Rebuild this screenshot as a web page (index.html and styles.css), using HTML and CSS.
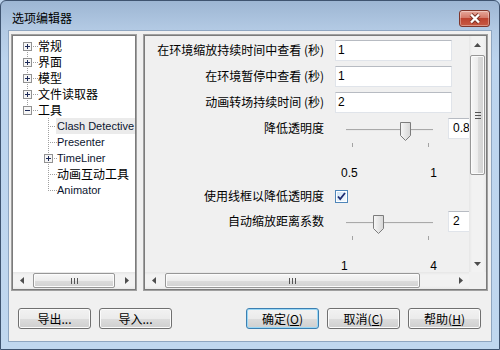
FILE: index.html
```html
<!DOCTYPE html>
<html lang="zh-CN">
<head>
  <meta charset="UTF-8">
  <title>选项编辑器</title>
  <link rel="stylesheet" href="styles.css">
</head>
<body>
  <div class="window">
    <div class="titlebar">
      <span class="title">选项编辑器</span>
      <span class="close">
        <svg width="12" height="11" viewBox="0 0 12 11">
          <path d="M2 1.5L10 9.5M10 1.5L2 9.5" stroke="#7a3328" stroke-width="4.2"/>
          <path d="M2 1.5L10 9.5M10 1.5L2 9.5" stroke="#fff" stroke-width="2.4"/>
        </svg>
      </span>
    </div>

    <div class="client">
      <div class="panes">
        <div class="tree-pane">
          <ul class="tree">
            <li><div class="row vl-down"><span class="cell"><svg width="9" height="9"><rect x="0.5" y="0.5" width="8" height="8" fill="#f6f6f6" stroke="#929292"/><path d="M2 4.5h5M4.5 2v5" stroke="#1d2a58"/></svg></span><span class="dots"></span><span class="lbl">常规</span></div></li>
            <li><div class="row vl-full"><span class="cell"><svg width="9" height="9"><rect x="0.5" y="0.5" width="8" height="8" fill="#f6f6f6" stroke="#929292"/><path d="M2 4.5h5M4.5 2v5" stroke="#1d2a58"/></svg></span><span class="dots"></span><span class="lbl">界面</span></div></li>
            <li><div class="row vl-full"><span class="cell"><svg width="9" height="9"><rect x="0.5" y="0.5" width="8" height="8" fill="#f6f6f6" stroke="#929292"/><path d="M2 4.5h5M4.5 2v5" stroke="#1d2a58"/></svg></span><span class="dots"></span><span class="lbl">模型</span></div></li>
            <li><div class="row vl-full"><span class="cell"><svg width="9" height="9"><rect x="0.5" y="0.5" width="8" height="8" fill="#f6f6f6" stroke="#929292"/><path d="M2 4.5h5M4.5 2v5" stroke="#1d2a58"/></svg></span><span class="dots"></span><span class="lbl">文件读取器</span></div></li>
            <li>
              <div class="row vl-up"><span class="cell"><svg width="9" height="9"><rect x="0.5" y="0.5" width="8" height="8" fill="#f6f6f6" stroke="#929292"/><path d="M2 4.5h5" stroke="#1d2a58"/></svg></span><span class="dots"></span><span class="lbl">工具</span></div>
              <ul class="sub">
                <li><div class="row vl-full"><span class="cell leaf"></span><span class="dots"></span><span class="lbl en sel">Clash Detective</span></div></li>
                <li><div class="row vl-full"><span class="cell leaf"></span><span class="dots"></span><span class="lbl en">Presenter</span></div></li>
                <li><div class="row vl-full"><span class="cell"><svg width="9" height="9"><rect x="0.5" y="0.5" width="8" height="8" fill="#f6f6f6" stroke="#929292"/><path d="M2 4.5h5M4.5 2v5" stroke="#1d2a58"/></svg></span><span class="dots"></span><span class="lbl en">TimeLiner</span></div></li>
                <li><div class="row vl-full"><span class="cell leaf"></span><span class="dots"></span><span class="lbl">动画互动工具</span></div></li>
                <li><div class="row vl-up"><span class="cell leaf"></span><span class="dots"></span><span class="lbl en">Animator</span></div></li>
              </ul>
            </li>
          </ul>
          <div class="hscroll">
            <span class="sbtn"><svg width="4" height="7"><path d="M4 0L0 3.5L4 7Z" fill="#4d4d4d"/></svg></span>
            <span class="hthumb" style="margin-left:3px;width:82px"><svg width="7" height="6"><path d="M0.5 0v6M3.5 0v6M6.5 0v6" stroke="#555"/></svg></span>
            <span class="track"></span>
            <span class="sbtn"><svg width="4" height="7"><path d="M0 0L4 3.5L0 7Z" fill="#4d4d4d"/></svg></span>
          </div>
        </div>

        <div class="opts-pane">
          <div class="opts">
            <div class="opt">
              <span class="opt-label">在环境缩放持续时间中查看 (秒)</span>
              <span class="txt">1</span>
            </div>
            <div class="opt">
              <span class="opt-label">在环境暂停中查看 (秒)</span>
              <span class="txt">1</span>
            </div>
            <div class="opt">
              <span class="opt-label">动画转场持续时间 (秒)</span>
              <span class="txt">2</span>
            </div>
            <div class="opt slider-row">
              <span class="opt-label">降低透明度</span>
              <span class="slider">
                <span class="track-line"></span>
                <span class="ticks"><i></i><i></i></span>
                <span class="thumb" style="left:65px"><svg width="11" height="19"><defs><linearGradient id="tg1" x1="0" x2="1"><stop offset="0" stop-color="#f7f7f7"/><stop offset="1" stop-color="#d6d6d6"/></linearGradient></defs><path d="M0.5 0.5H10.5V13.5L5.5 18.5L0.5 13.5Z" fill="url(#tg1)" stroke="#7c7c7c"/></svg></span>
              </span>
              <span class="num">0.8</span>
            </div>
            <div class="opt tick-row">
              <span class="opt-label"></span>
              <span class="tick-labels"><span>0.5</span><span>1</span></span>
            </div>
            <div class="opt check-row">
              <span class="opt-label">使用线框以降低透明度</span>
              <svg class="check" width="13" height="13"><defs><linearGradient id="cg" x1="0" y1="0" x2="1" y2="1"><stop offset="0" stop-color="#cfe4f7"/><stop offset="1" stop-color="#f4f9fd"/></linearGradient></defs><rect x="0.5" y="0.5" width="12" height="12" fill="#fff" stroke="#4f86b9"/><rect x="2" y="2" width="9" height="9" fill="url(#cg)"/><path d="M3 6.5L5.2 9L10 3" fill="none" stroke="#1e2c72" stroke-width="1.8"/></svg>
            </div>
            <div class="opt slider-row">
              <span class="opt-label">自动缩放距离系数</span>
              <span class="slider">
                <span class="track-line"></span>
                <span class="ticks"><i></i><i></i></span>
                <span class="thumb" style="left:38px"><svg width="11" height="19"><defs><linearGradient id="tg2" x1="0" x2="1"><stop offset="0" stop-color="#f7f7f7"/><stop offset="1" stop-color="#d6d6d6"/></linearGradient></defs><path d="M0.5 0.5H10.5V13.5L5.5 18.5L0.5 13.5Z" fill="url(#tg2)" stroke="#7c7c7c"/></svg></span>
              </span>
              <span class="num">2</span>
            </div>
            <div class="opt tick-row">
              <span class="opt-label"></span>
              <span class="tick-labels"><span>1</span><span>4</span></span>
            </div>
          </div>

          <div class="vscroll">
            <span class="sbtn"><svg width="7" height="4"><path d="M0 4L3.5 0L7 4Z" fill="#4d4d4d"/></svg></span>
            <span class="vthumb" style="margin-top:2px;height:120px"><svg width="6" height="7"><path d="M0 0.5h6M0 3.5h6M0 6.5h6" stroke="#555"/></svg></span>
            <span class="track"></span>
            <span class="sbtn"><svg width="7" height="4"><path d="M0 0L7 0L3.5 4Z" fill="#4d4d4d"/></svg></span>
          </div>
          <div class="hscroll">
            <span class="sbtn"><svg width="4" height="7"><path d="M4 0L0 3.5L4 7Z" fill="#4d4d4d"/></svg></span>
            <span class="hthumb" style="margin-left:3px;width:255px"><svg width="7" height="6"><path d="M0.5 0v6M3.5 0v6M6.5 0v6" stroke="#555"/></svg></span>
            <span class="track"></span>
            <span class="sbtn"><svg width="4" height="7"><path d="M0 0L4 3.5L0 7Z" fill="#4d4d4d"/></svg></span>
          </div>
          <div class="corner"></div>
        </div>
      </div>

      <div class="actions">
        <div class="group">
          <button class="btn">导出...</button>
          <button class="btn">导入...</button>
        </div>
        <div class="group">
          <button class="btn default">确定(<u>O</u>)</button>
          <button class="btn">取消(<u>C</u>)</button>
          <button class="btn">帮助(<u>H</u>)</button>
        </div>
      </div>
    </div>
  </div>
</body>
</html>
```

FILE: styles.css
```css
body {
  margin: 0;
  width: 500px;
  height: 350px;
  overflow: hidden;
  font-family: "Noto Sans CJK SC", sans-serif;
  font-size: 12px;
  color: #000;
  background: #bcd3ec;
}
.window {
  width: 500px;
  height: 350px;
  box-sizing: border-box;
  border: 1px solid #3f5470;
  border-radius: 6px 6px 0 0;
  background: linear-gradient(#9db6d3, #b3cae4 29px, #bcd4ee 60px, #c0d7ef);
  display: flex;
  flex-direction: column;
}
.titlebar {
  height: 29px;
  flex: none;
  display: flex;
  align-items: center;
  justify-content: space-between;
  padding: 5px 9px 0 11px;
  box-sizing: border-box;
}
.title {
  line-height: 16px;
}
.close {
  width: 31px;
  height: 17px;
  box-sizing: border-box;
  border: 1px solid #7f362c;
  border-radius: 3px;
  background: linear-gradient(#e6a89b, #d57a6a 45%, #bd4330 50%, #c75a43);
  box-shadow: inset 0 0 0 1px rgba(255, 255, 255, 0.35);
  display: flex;
  align-items: center;
  justify-content: center;
}
.client {
  flex: 1;
  margin: 0 7px 7px 7px;
  border: 1px solid #8fa6c1;
  background: #f0f0f0;
  padding: 3px 3px 0 2px;
}
.panes {
  display: flex;
  gap: 6px;
  height: 257px;
}
.tree-pane,
.opts-pane {
  box-sizing: border-box;
  border: 1px solid #a0a0a0;
  padding: 1px;
  box-shadow: inset 0 0 0 1px #7b7b7b;
}
.tree-pane {
  width: 126px;
  flex: none;
  background: #fff;
  display: flex;
  flex-direction: column;
}
.tree,
.tree ul {
  list-style: none;
  margin: 0;
  padding: 0;
}
.tree {
  flex: 1;
  overflow: hidden;
  padding-top: 2px;
}
.row {
  --vx: 14px;
  display: flex;
  align-items: center;
  height: 16px;
  padding-left: 10px;
  white-space: nowrap;
}
.sub .row {
  --vx: 35px;
  padding-left: 31px;
}
.vl-full {
  background: repeating-linear-gradient(180deg, #a0a0a0 0 1px, transparent 1px 2px) var(--vx) 0 / 1px 16px no-repeat;
}
.vl-down {
  background: repeating-linear-gradient(180deg, #a0a0a0 0 1px, transparent 1px 2px) var(--vx) 8px / 1px 8px no-repeat;
}
.vl-up {
  background: repeating-linear-gradient(180deg, #a0a0a0 0 1px, transparent 1px 2px) var(--vx) 0 / 1px 8px no-repeat;
}
.cell {
  width: 9px;
  height: 16px;
  flex: none;
  display: flex;
  align-items: center;
}
.cell.leaf {
  background: repeating-linear-gradient(90deg, #a0a0a0 0 1px, transparent 1px 2px) 4px 8px / 5px 1px no-repeat;
}
.dots {
  width: 6px;
  height: 16px;
  flex: none;
  background: repeating-linear-gradient(90deg, transparent 0 1px, #a0a0a0 1px 2px) 0 8px / 100% 1px no-repeat;
}
.sub .dots {
  width: 4px;
}
.lbl {
  line-height: 16px;
}
.en {
  font-family: "Liberation Sans", sans-serif;
  font-size: 11px;
  color: #0c1530;
}
.sel {
  background: #ebebeb;
  margin-left: -1px;
  padding: 0 2px 0 1px;
}

/* scrollbars */
.hscroll {
  height: 17px;
  flex: none;
  display: flex;
  align-items: center;
  background: linear-gradient(#e6e6e6, #f2f2f2 3px, #f2f2f2 14px, #e9e9e9);
}
.vscroll {
  display: flex;
  flex-direction: column;
  align-items: center;
  background: linear-gradient(90deg, #e6e6e6, #f2f2f2 3px, #f2f2f2 14px, #e9e9e9);
}
.sbtn {
  width: 17px;
  height: 17px;
  flex: none;
  display: flex;
  align-items: center;
  justify-content: center;
}
.track {
  flex: 1;
}
.hthumb,
.vthumb {
  box-sizing: border-box;
  flex: none;
  border: 1px solid #979797;
  border-radius: 2px;
  display: flex;
  align-items: center;
  justify-content: center;
}
.hthumb {
  height: 15px;
  background: linear-gradient(#f7f7f7, #ececec 50%, #dcdcdc 51%, #d2d2d2);
  box-shadow: inset 0 0 0 1px #fbfbfb;
}
.vthumb {
  width: 15px;
  background: linear-gradient(90deg, #f7f7f7, #ececec 50%, #dcdcdc 51%, #d2d2d2);
  box-shadow: inset 0 0 0 1px #fbfbfb;
}
.corner {
  background: #f0f0f0;
}

/* options */
.opts-pane {
  flex: 1;
  display: grid;
  grid-template-columns: 1fr 17px;
  grid-template-rows: 1fr 17px;
  background: #f0f0f0;
}
.opts {
  overflow: hidden;
  padding-top: 1px;
}
.opt {
  display: flex;
  align-items: center;
  height: 26px;
  white-space: nowrap;
}
.opt-label {
  width: 179px;
  margin-right: 11px;
  flex: none;
  text-align: right;
  line-height: 16px;
}
.txt {
  width: 117px;
  height: 21px;
  flex: none;
  box-sizing: border-box;
  border: 1px solid #e0e4ea;
  border-top-color: #b7bbc2;
  background: #fff;
  padding-left: 2px;
  font-family: "Liberation Sans", sans-serif;
  font-size: 12px;
  line-height: 19px;
}
.slider-row {
  height: 36px;
  align-items: flex-start;
}
.slider-row .opt-label {
  line-height: 26px;
}
.slider {
  position: relative;
  width: 109px;
  height: 36px;
  flex: none;
  padding-top: 14px;
  box-sizing: border-box;
}
.track-line {
  display: block;
  height: 2px;
  margin: 0 11px;
  background: linear-gradient(#a9a9a9 0 1px, #e9e9e9 1px);
}
.ticks {
  display: flex;
  justify-content: space-between;
  width: 77px;
  margin: 12px 0 0 17px;
}
.ticks i {
  width: 1px;
  height: 4px;
  background: #a3a3a3;
}
.thumb {
  position: absolute;
  top: 7px;
  width: 11px;
  height: 19px;
}
.thumb svg {
  display: block;
}
.num {
  width: 40px;
  height: 21px;
  flex: none;
  margin: 3px 0 0 4px;
  box-sizing: border-box;
  border: 1px solid #e0e4ea;
  border-top-color: #b7bbc2;
  background: #fff;
  padding-left: 4px;
  font-family: "Liberation Sans", sans-serif;
  font-size: 12px;
  line-height: 19px;
}
.tick-row {
  height: 33px;
  align-items: flex-start;
}
.tick-labels {
  width: 96px;
  margin: 14px 0 0 6px;
  display: flex;
  justify-content: space-between;
  font-family: "Liberation Sans", sans-serif;
  font-size: 12px;
  line-height: 16px;
}
.check-row {
  height: 24px;
}
.check {
  flex: none;
}

/* buttons */
.actions {
  display: flex;
  justify-content: space-between;
  margin-top: 17px;
  padding: 0 7px;
}
.group {
  display: flex;
  gap: 8px;
}
.btn {
  width: 73px;
  height: 21px;
  box-sizing: border-box;
  border: 1px solid #707070;
  border-radius: 3px;
  background: linear-gradient(#f2f2f2, #ebebeb 50%, #dddddd 50%, #cfcfcf);
  box-shadow: inset 0 0 0 1px #fbfbfb;
  font-family: "Noto Sans CJK SC", sans-serif;
  font-size: 12px;
  line-height: 17px;
  color: #000;
  padding: 0;
}
.btn.default {
  border-color: #3c7fb1;
  box-shadow: inset 0 0 0 1px #9ad8f6;
}
```
